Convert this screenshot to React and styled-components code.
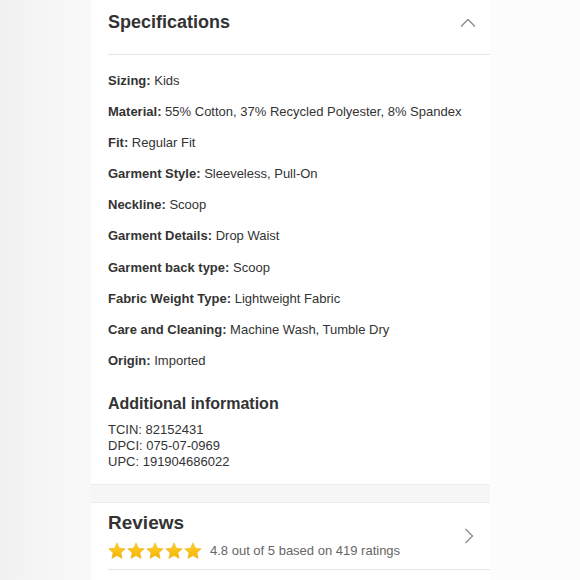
import * as React from 'react';
import styled, { createGlobalStyle } from 'styled-components';

const GlobalStyle = createGlobalStyle`
  html, body {
    margin: 0;
    padding: 0;
    background: #fbfbfb;
  }
  body {
    font-family: "Liberation Sans", Arial, Helvetica, sans-serif;
    color: #333;
    -webkit-font-smoothing: antialiased;
  }
`;

const Page = styled.div`
  display: grid;
  grid-template-columns: 91px 399px 1fr;
  height: 580px;
  overflow: hidden;
`;

const Gutter = styled.div`
  background: linear-gradient(to right, #f1f1f1, #f7f7f7 70%, #f8f8f8);
`;

const Side = styled.div`
  background: #fcfcfc;
`;

const Card = styled.main`
  background: #fff;
  display: flex;
  flex-direction: column;
`;

const Section = styled.section`
  padding: 0 0 0 17px;
`;

const Header = styled.div`
  display: flex;
  align-items: center;
  justify-content: space-between;
  height: 55px;
  padding: 0 14px 9px 0;
  border-bottom: 1px solid #e6e6e6;
  box-sizing: border-box;
`;

const Title = styled.h2`
  margin: 0;
  font-size: ${(p) => p.$size || 19}px;
  font-weight: 700;
  color: #333;
`;

const SpecList = styled.ul`
  list-style: none;
  margin: 0;
  padding: 18px 0 0;
`;

const SpecItem = styled.li`
  font-size: 13px;
  line-height: 15px;
  height: 31.1px;
  color: #333;
`;

const Label = styled.b`
  font-weight: 700;
`;

const SubTitle = styled.h3`
  margin: 11px 0 9px;
  font-size: 16px;
  font-weight: 700;
  color: #333;
`;

const InfoLines = styled.div`
  font-size: 13px;
  line-height: 16px;
  color: #333;
  padding-bottom: 14px;
`;

const Band = styled.div`
  height: 17px;
  background: #f6f6f6;
  border-top: 1px solid #ececec;
  border-bottom: 1px solid #ececec;
`;

const ReviewRow = styled.div`
  display: flex;
  align-items: center;
  justify-content: space-between;
  padding: 9px 16px 9px 0;
  border-bottom: 1px solid #e6e6e6;
`;

const ReviewText = styled.div`
  display: flex;
  flex-direction: column;
  gap: 8px;
`;

const Rating = styled.div`
  display: flex;
  align-items: center;
  gap: 8px;
  font-size: 13px;
  color: #666;
`;

const Stars = styled.div`
  display: flex;
  gap: 1px;
`;

const Chevron = styled.svg`
  display: block;
  fill: none;
  stroke: #8a8a8a;
  stroke-width: 1.3;
`;

const Star = () => (
  <svg width="18" height="18" viewBox="0 0 24 24">
    <defs>
      <linearGradient id="sg" x1="0" y1="0" x2="0" y2="1">
        <stop offset="0" stopColor="#ffd22e" />
        <stop offset="1" stopColor="#f4b400" />
      </linearGradient>
    </defs>
    <path
      d="M12 1.2l3.3 7.1 7.7.8-5.8 5.2 1.7 7.6L12 18l-6.9 3.9 1.7-7.6L1 9.1l7.7-.8z"
      fill="url(#sg)"
      stroke="#e9a400"
      strokeWidth="0.6"
    />
  </svg>
);

const specs = [
  ['Sizing', 'Kids'],
  ['Material', '55% Cotton, 37% Recycled Polyester, 8% Spandex'],
  ['Fit', 'Regular Fit'],
  ['Garment Style', 'Sleeveless, Pull-On'],
  ['Neckline', 'Scoop'],
  ['Garment Details', 'Drop Waist'],
  ['Garment back type', 'Scoop'],
  ['Fabric Weight Type', 'Lightweight Fabric'],
  ['Care and Cleaning', 'Machine Wash, Tumble Dry'],
  ['Origin', 'Imported'],
];

const App = () => (
  <>
    <GlobalStyle />
    <Page>
      <Gutter />
      <Card>
        <Section>
          <Header>
            <Title $size={18}>Specifications</Title>
            <Chevron width="16" height="10" viewBox="0 0 16 10">
              <path d="M1 8.5L8 1.5l7 7" />
            </Chevron>
          </Header>
          <SpecList>
            {specs.map(([k, v]) => (
              <SpecItem key={k}>
                <Label>{k}:</Label> {v}
              </SpecItem>
            ))}
          </SpecList>
          <SubTitle>Additional information</SubTitle>
          <InfoLines>
            <div>TCIN: 82152431</div>
            <div>DPCI: 075-07-0969</div>
            <div>UPC: 191904686022</div>
          </InfoLines>
        </Section>
        <Band />
        <Section>
          <ReviewRow>
            <ReviewText>
              <Title>Reviews</Title>
              <Rating>
                <Stars>
                  {[0, 1, 2, 3, 4].map((i) => (
                    <Star key={i} />
                  ))}
                </Stars>
                4.8 out of 5 based on 419 ratings
              </Rating>
            </ReviewText>
            <Chevron width="10" height="16" viewBox="0 0 10 16">
              <path d="M1.5 1l7 7-7 7" />
            </Chevron>
          </ReviewRow>
        </Section>
      </Card>
      <Side />
    </Page>
  </>
);

export default App;
